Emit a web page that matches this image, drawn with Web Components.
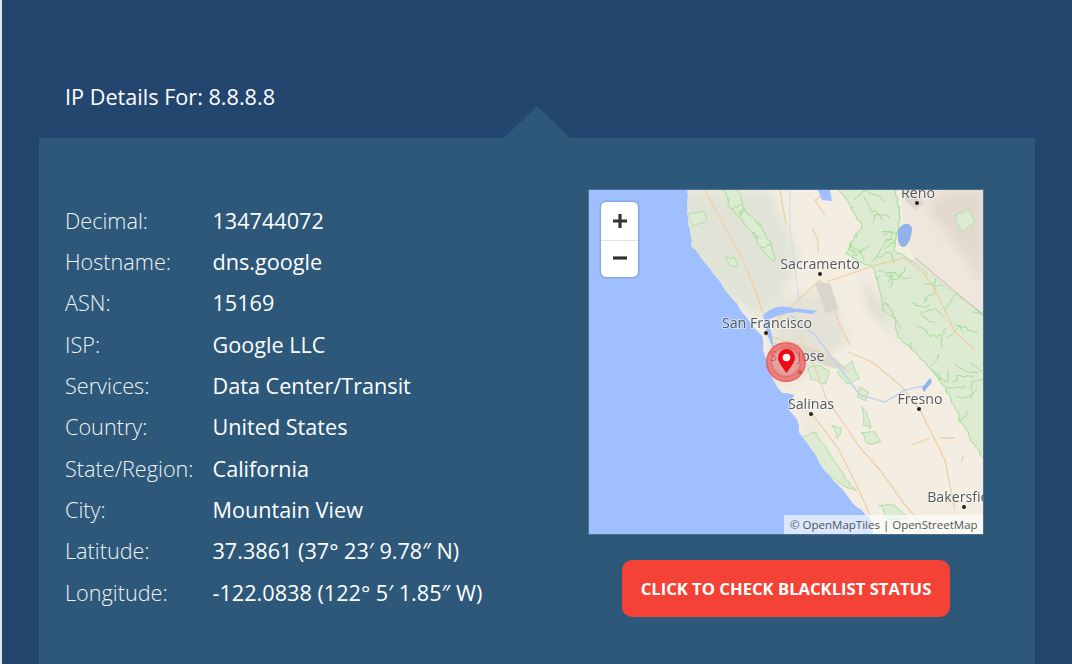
<!DOCTYPE html>
<html lang="en">
<head>
<meta charset="utf-8">
<title>IP Details</title>
<style>
html, body { margin: 0; height: 100%; overflow: hidden; background: #23466f; }
body { font-family: "Open Sans", "Liberation Sans", sans-serif; color: #fff; }
</style>
</head>
<body>
<ip-page>
  <span slot="title">IP Details For: 8.8.8.8</span>
  <ip-row label="Decimal:">134744072</ip-row>
  <ip-row label="Hostname:">dns.google</ip-row>
  <ip-row label="ASN:">15169</ip-row>
  <ip-row label="ISP:">Google LLC</ip-row>
  <ip-row label="Services:">Data Center/Transit</ip-row>
  <ip-row label="Country:">United States</ip-row>
  <ip-row label="State/Region:">California</ip-row>
  <ip-row label="City:">Mountain View</ip-row>
  <ip-row label="Latitude:">37.3861 (37° 23′ 9.78″ N)</ip-row>
  <ip-row label="Longitude:">-122.0838 (122° 5′ 1.85″ W)</ip-row>
  <ip-map slot="side"></ip-map>
  <cta-button slot="side">Click to check blacklist status</cta-button>
</ip-page>

<script>
'use strict';

function define_with_shadow(name, html) {
    customElements.define(
        name,
        class extends HTMLElement {
            constructor() {
                super();
                this.attachShadow({ mode: 'open' }).innerHTML = html;
            }
        }
    );
}

define_with_shadow('ip-page', `
<style>
:host { display: block; height: 664px; box-sizing: border-box; border-left: 2px solid #dfe6ee; padding: 0 37px; overflow: hidden; }
h1 { margin: 0; padding: 79px 0 0 26px; height: 59px; font-size: 21.65px; line-height: 35px; font-weight: 400; }
.panel { position: relative; background: #2d5879; padding: 52px 52px 47px 26px; display: flex; justify-content: space-between; align-items: flex-start; min-height: 600px; box-sizing: border-box; }
.panel::before { content: ""; position: absolute; left: 465px; top: -32px; width: 66px; height: 32px; background: #2d5879; clip-path: polygon(50% 0, 100% 100%, 0 100%); }
.rows { display: grid; grid-auto-rows: 41.33px; margin-top: 9.6px; }
.side { display: flex; flex-direction: column; align-items: center; gap: 26px; width: 394px; }
</style>
<h1><slot name="title"></slot></h1>
<div class="panel">
  <div class="rows"><slot></slot></div>
  <div class="side"><slot name="side"></slot></div>
</div>`);

customElements.define(
    'ip-row',
    class extends HTMLElement {
        constructor() {
            super();
            this.attachShadow({ mode: 'open' }).innerHTML = `
<style>
:host { display: grid; grid-template-columns: 147.5px auto; align-items: center; font-size: 21.65px; white-space: nowrap; }
.label { font-weight: 300; color: #f0f4f7; }
</style>
<span class="label"></span><span><slot></slot></span>`;
        }
        connectedCallback() {
            this.shadowRoot.querySelector('.label').textContent = this.getAttribute('label');
        }
    }
);

define_with_shadow('map-zoom', `
<style>
:host { display: block; position: absolute; left: 12px; top: 12px; width: 37px; background: #fff; border-radius: 5px; box-shadow: 0 0 0 1.5px rgba(90,120,190,.35); }
div { height: 37.5px; display: flex; align-items: center; justify-content: center; }
div + div { box-shadow: inset 0 1px 0 #e4e4e4; }
svg { display: block; }
</style>
<div><svg width="16" height="16" viewBox="0 0 16 16"><path d="M8 1v14M1 8h14" stroke="#333" stroke-width="3.2" fill="none"/></svg></div>
<div><svg width="16" height="16" viewBox="0 0 16 16"><path d="M1 8h14" stroke="#333" stroke-width="3.2" fill="none"/></svg></div>`);

define_with_shadow('map-credit', `
<style>
:host { display: block; position: absolute; right: 0; bottom: 0; width: 199px; box-sizing: border-box; padding-left: 6px; font-size: 11.5px; line-height: 19px; color: #555; background: rgba(255,255,255,.62); white-space: nowrap; }
</style>
© OpenMapTiles | OpenStreetMap`);

// fixed seed, the picture has to come out the same every time
let seed = 7;
function noise(amount) {
    seed = (seed * 16807) % 2147483647;
    return ((seed / 2147483647) - 0.5) * 2 * amount;
}

// break a polyline into small jittered steps, so borders look hand drawn
function wiggle(points, amount, step = 5) {
    const out = [];
    for (let i = 0; i < points.length - 1; i++) {
        const [x1, y1] = points[i];
        const [x2, y2] = points[i + 1];
        const n = Math.max(1, Math.round(Math.hypot(x2 - x1, y2 - y1) / step));
        for (let j = 0; j < n; j++) {
            out.push([
                x1 + ((x2 - x1) * j) / n + noise(amount),
                y1 + ((y2 - y1) * j) / n + noise(amount),
            ]);
        }
    }
    out.push(points[points.length - 1]);
    return 'M' + out.map(p => p[0].toFixed(1) + ' ' + p[1].toFixed(1)).join('L');
}

const COAST_POINTS = [[688, 186], [687, 213], [692, 246], [713, 273], [733, 300], [743, 313], [752, 325], [762, 337], [763, 350], [770, 373], [775, 383], [783, 393], [793, 395], [790, 410], [797, 420], [800, 433], [823, 467], [837, 483], [857, 507], [870, 517], [873, 540], [990, 540], [990, 186], [688, 186]];
const COAST = wiggle(COAST_POINTS, 0.9, 6) + 'Z';

const SIERRA = wiggle([[837, 186], [895, 186], [900, 215], [893, 250], [915, 262], [950, 290], [990, 318], [990, 470], [960, 420], [945, 388], [937, 378], [930, 367], [912, 350], [898, 337], [895, 320], [883, 310], [883, 300], [873, 267], [845, 254], [862, 225], [850, 205], [837, 186]], 1.3, 4) + 'Z';

const NORTH_PARK = wiggle([[724, 186], [738, 188], [745, 210], [760, 225], [772, 246], [775, 262], [762, 250], [752, 232], [738, 215], [728, 205], [724, 186]], 1.2, 4) + 'Z';

const PATCHES = [
    [[688, 214], [704, 211], [706, 220], [694, 226], [688, 214]],
    [[726, 257], [735, 258], [738, 266], [730, 266], [726, 257]],
    [[808, 368], [820, 366], [830, 372], [826, 384], [812, 380], [808, 368]],
    [[838, 372], [852, 362], [860, 378], [846, 384], [838, 372]],
    [[860, 388], [868, 392], [866, 400], [858, 396], [860, 388]],
    [[862, 408], [868, 412], [870, 428], [864, 424], [862, 408]],
    [[800, 438], [815, 432], [828, 452], [846, 478], [856, 492], [838, 482], [815, 462], [800, 438]],
    [[832, 425], [842, 428], [838, 438], [832, 425]],
    [[862, 432], [875, 432], [880, 442], [868, 444], [862, 432]],
    [[880, 505], [895, 505], [908, 518], [888, 520], [880, 505]],
];

const ROADS = [
    'M705 190L722 222L738 250L748 272L758 298L762 312',
    'M780 190L786 225',
    'M812 228L818 240L818 252',
    'M820 280L795 303L775 322',
    'M820 280L832 298L838 322L850 345',
    'M826 282L880 264L905 258',
    'M905 258L925 274L940 300L955 332L975 350',
    'M800 338L815 368L826 398L862 450L880 470L905 505L925 528',
    'M812 414L838 448L858 488L870 515',
    'M920 410L945 460L955 510',
    'M912 445L930 438',
    'M940 438L955 438',
    'M963 455L962 462',
    'M848 352L872 362L900 385L920 410',
    'M765 335L800 345L830 355',
    'M830 190L815 200L825 215',
];

const PLACES = [
    ['Reno', 918, 198, 917, 203],
    ['Sacramento', 820, 269, 820, 274],
    ['San Francisco', 767, 328, 766, 333],
    ['San Jose', 797, 361, 800, 372],
    ['Salinas', 811, 409, 811, 414],
    ['Fresno', 920, 404, 919, 409],
    ['Bakersfield', 964, 502, 964, 507],
];

const places_svg = PLACES.map(([name, x, y, dx, dy]) => `
    <circle cx="${dx}" cy="${dy}" r="2" fill="#222"/>
    <text x="${x}" y="${y}" text-anchor="middle" font-size="14.2" fill="#53575c" stroke="rgba(255,255,255,.5)" stroke-width="2" paint-order="stroke">${name}</text>`).join('');

// short random walks, these read as the park and county borders of the tiles
function scribbles(count, x, y, w, h) {
    let d = '';
    for (let i = 0; i < count; i++) {
        const cx = x + (noise(0.5) + 0.5) * w;
        const cy = y + (noise(0.5) + 0.5) * h;
        const ex = cx + noise(24);
        const ey = cy + noise(24);
        d += wiggle([[cx, cy], [(cx + ex) / 2 + noise(10), (cy + ey) / 2 + noise(10)], [ex, ey]], 1.6, 3);
    }
    return d;
}

define_with_shadow('ip-map', `
<style>
:host { display: block; position: relative; width: 394px; height: 344px; overflow: hidden; background: #a0bffe; box-shadow: 0 0 0 1px rgba(150,190,230,.25); }
svg { display: block; }
text { font-family: "Open Sans", "Liberation Sans", sans-serif; filter: blur(.3px); }
</style>
<svg width="394" height="344" viewBox="589 190 394 344">
  <defs>
    <filter id="soft"><feGaussianBlur stdDeviation="0.45"/></filter>
    <filter id="haze"><feGaussianBlur stdDeviation="6"/></filter>
    <clipPath id="land"><path d="${COAST}"/></clipPath>
    <clipPath id="parks"><path d="${SIERRA}"/><path d="${NORTH_PARK}"/></clipPath>
    <radialGradient id="halo">
      <stop offset="0" stop-color="#d9a0a0" stop-opacity=".7"/>
      <stop offset=".62" stop-color="#e88080" stop-opacity=".7"/>
      <stop offset=".74" stop-color="#e35050" stop-opacity=".8"/>
      <stop offset=".84" stop-color="#ee7070" stop-opacity=".8"/>
      <stop offset="1" stop-color="#e83c3c" stop-opacity=".8"/>
    </radialGradient>
  </defs>
  <g filter="url(#soft)">
    <path d="${COAST}" fill="#f3eee1"/>
    <g clip-path="url(#land)">
      <path d="M680 190L770 190L800 260L780 300L760 320L713 285L680 250Z" fill="#e2e3d7" filter="url(#haze)"/>
      <path d="M775 300L830 290L850 340L800 380L770 385Z" fill="#e4e2d6" filter="url(#haze)"/>
      <path d="M800 400L830 460L850 490L810 440Z" fill="#e2e3d3" filter="url(#haze)"/>
      <path d="${SIERRA}" fill="#dcebd1" stroke="#9fdc96" stroke-width="1"/>
      <path d="${NORTH_PARK}" fill="#dcebd1" stroke="#9fdc96" stroke-width=".9"/>
      <path d="M860 270L895 330L915 355L870 310Z" fill="#d8d8cd" filter="url(#haze)"/>
      <g clip-path="url(#parks)">
        <path d="${scribbles(120, 840, 190, 143, 270)}" fill="none" stroke="#98d98e" stroke-width=".8"/>
        <path d="${scribbles(24, 724, 190, 50, 70)}" fill="none" stroke="#98d98e" stroke-width=".8"/>
      </g>
      ${PATCHES.map(p => `<path d="${wiggle(p, 1.1, 4)}Z" fill="#dcebd1" stroke="#a9dea0" stroke-width=".9"/>`).join('')}
      <path d="M900 186L990 186L990 318L950 290L915 262L905 232Z" fill="#efe7db"/>
      <path d="M925 205L950 190L983 190L983 285L960 250L940 225Z" fill="#e3d8cc" filter="url(#haze)"/>
      <path d="${wiggle([[955, 215], [968, 210], [975, 222], [962, 232], [955, 215]], 1, 4)}Z" fill="#dcebd1" stroke="#a9dea0" stroke-width=".8"/>
      <path d="M915 258L983 315" stroke="#b9b6ac" stroke-width="1" fill="none"/>
      ${ROADS.map(d => `<path d="${d}" fill="none" stroke="#efcfa8" stroke-width="1.3"/>`).join('')}
      <path d="M815 283L830 283L838 308L826 314Z" fill="#d8d5cf"/>
      <path d="M768 342L800 345L835 358L850 372L826 366L796 352Z" fill="#dbd8d0"/>
      <path d="M900 178L915 190L925 203L915 210L905 200Z" fill="#dcd6cc"/>
      <path d="M763 315C770 308 780 305 787 307C795 309 805 309 817 311L812 314L797 312C788 312 776 316 768 320L772 335L774 351L767 334Z" fill="#a0bffe"/>
      <path d="M898 230C902 222 910 222 912 228C912 240 906 248 902 247C898 245 897 238 898 230Z" fill="#8fb3ea"/>
      <path d="M818 190L830 190L832 201L822 200Z" fill="#a0bffe"/>
      <path d="M790 190L790 230L795 270L800 305" stroke="#d5dfe8" stroke-width="1.4" fill="none"/>
      <path d="M790 315L815 335L830 355L860 395L885 402L905 390L928 385" stroke="#c3d2ea" stroke-width="1.6" fill="none"/>
      <path d="M924 392L932 382L930 378L922 388Z" fill="#8fb3ea"/>
    </g>
  </g>
  ${places_svg}
  <circle cx="786" cy="362" r="20" fill="url(#halo)"/>
  <path d="M786.500 373C781.500 366 778 362 778 357.500A8.500 8.500 0 0 1 795 357.500C795 362 791.500 366 786.500 373Z" fill="#ee0a14"/>
  <circle cx="786.500" cy="357.500" r="3.800" fill="#fff"/>
</svg>
<map-zoom></map-zoom>
<map-credit></map-credit>`);

define_with_shadow('cta-button', `
<style>
:host { display: flex; align-items: center; justify-content: center; width: 328px; height: 57px; background: #f44336; border-radius: 10px; color: #fff; font-size: 16.65px; font-weight: 700; text-transform: uppercase; white-space: nowrap; cursor: pointer; }
</style>
<slot></slot>`);
</script>
</body>
</html>
